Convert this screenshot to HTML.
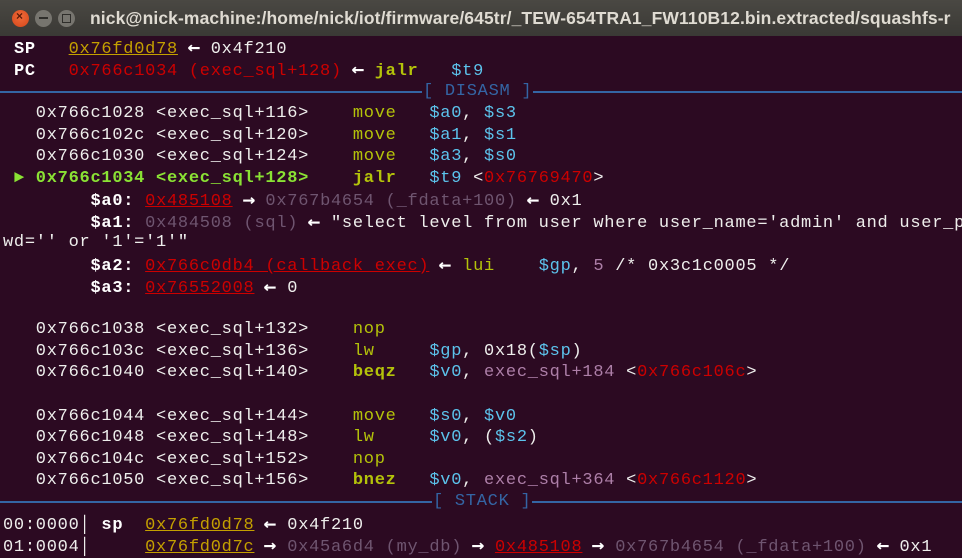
<!DOCTYPE html>
<html><head><meta charset="utf-8"><style>
*{margin:0;padding:0}
body{width:962px;height:558px;overflow:hidden;background:#2c0a22;position:relative;font-family:"Liberation Mono","DejaVu Sans Mono",monospace}
#tb{position:absolute;left:0;top:0;width:962px;height:36px;background:linear-gradient(#4a4843,#3a3935);overflow:hidden}
#tb .t{position:absolute;left:90px;top:8px;font:bold 17.5px "Liberation Sans",sans-serif;color:#dfdbd2;white-space:nowrap;letter-spacing:0.1px}
.b{position:absolute;top:10px;width:17px;height:17px;border-radius:50%;}
.r{position:absolute;left:3px;height:22px;line-height:22px;font-size:17px;letter-spacing:0.73px;white-space:pre;color:#eeeeec;max-width:959px;overflow:hidden}
.w{color:#fff;font-weight:bold}
.a{color:#fff;font-weight:bold;display:inline-block;width:10.93px;letter-spacing:0;font-family:"DejaVu Sans Mono",monospace;transform:scale(1.25,1.15)}
.y{color:#c4a000}.u{text-decoration:underline}
.rd{color:#cc0000}.g{color:#8ae234;font-weight:bold}
.m{color:#b4c30a}.mb{color:#b4c30a;font-weight:bold}
.c{color:#5cc3ec}.p{color:#ad7fa8}.d{color:#6f5570}
.sep{position:absolute;left:0;width:962px;height:2px;background:#3465a4}
.lab{position:absolute;height:22px;line-height:22px;font-size:17px;letter-spacing:0.73px;white-space:pre;color:#3465a4;background:#2c0a22;padding:0 1px}
</style></head><body>
<div id="tb">
<div class="b" style="left:12px;background:radial-gradient(circle at 50% 40%,#f06b3a,#d4461a);"><span style="position:absolute;left:4px;top:-1px;font:bold 12px 'Liberation Sans';color:#5a1a08">×</span></div>
<div class="b" style="left:35px;background:#77756f;"><span style="position:absolute;left:4px;top:7px;width:9px;height:2px;background:#2f2e2b"></span></div>
<div class="b" style="left:58px;background:#77756f;"><span style="position:absolute;left:4px;top:4px;width:7px;height:7px;border:1px solid #2f2e2b"></span></div>
<div class="t">nick@nick-machine:/home/nick/iot/firmware/645tr/_TEW-654TRA1_FW110B12.bin.extracted/squashfs-r</div>
</div>
<div class="r" style="top:37px"> <span class="w">SP</span>   <span class="y u">0x76fd0d78</span> <span class="a">←</span> 0x4f210</div>
<div class="r" style="top:59px"> <span class="w">PC</span>   <span class="rd">0x766c1034 (exec_sql+128)</span> <span class="a">←</span> <span class="mb">jalr</span>   <span class="c">$t9</span></div>
<div class="sep" style="top:91px"></div><div class="lab" style="top:81px;left:422px">[ DISASM ]</div>
<div class="r" style="top:103px">   0x766c1028 &lt;exec_sql+116&gt;    <span class="m">move</span>   <span class="c">$a0</span>, <span class="c">$s3</span></div>
<div class="r" style="top:125px">   0x766c102c &lt;exec_sql+120&gt;    <span class="m">move</span>   <span class="c">$a1</span>, <span class="c">$s1</span></div>
<div class="r" style="top:146px">   0x766c1030 &lt;exec_sql+124&gt;    <span class="m">move</span>   <span class="c">$a3</span>, <span class="c">$s0</span></div>
<div class="r" style="top:168px"> <span class="g">► 0x766c1034 &lt;exec_sql+128&gt;</span>    <span class="mb">jalr</span>   <span class="c">$t9</span> &lt;<span class="rd">0x76769470</span>&gt;</div>
<div class="r" style="top:189px">        <span class="w">$a0:</span> <span class="rd u">0x485108</span> <span class="a">→</span> <span class="d">0x767b4654 (_fdata+100)</span> <span class="a">←</span> 0x1</div>
<div class="r" style="top:211px">        <span class="w">$a1:</span> <span class="d">0x484508 (sql)</span> <span class="a">←</span> "select level from user where user_name='admin' and user_p</div>
<div class="r" style="top:232px">wd='' or '1'='1'"</div>
<div class="r" style="top:254px">        <span class="w">$a2:</span> <span class="rd u">0x766c0db4 (callback_exec)</span> <span class="a">←</span> <span class="m">lui</span>    <span class="c">$gp</span>, <span class="p">5</span> /* 0x3c1c0005 */</div>
<div class="r" style="top:276px">        <span class="w">$a3:</span> <span class="rd u">0x76552008</span> <span class="a">←</span> 0</div>
<div class="r" style="top:319px">   0x766c1038 &lt;exec_sql+132&gt;    <span class="m">nop</span></div>
<div class="r" style="top:341px">   0x766c103c &lt;exec_sql+136&gt;    <span class="m">lw</span>     <span class="c">$gp</span>, 0x18(<span class="c">$sp</span>)</div>
<div class="r" style="top:362px">   0x766c1040 &lt;exec_sql+140&gt;    <span class="mb">beqz</span>   <span class="c">$v0</span>, <span class="p">exec_sql+184</span> &lt;<span class="rd">0x766c106c</span>&gt;</div>
<div class="r" style="top:406px">   0x766c1044 &lt;exec_sql+144&gt;    <span class="m">move</span>   <span class="c">$s0</span>, <span class="c">$v0</span></div>
<div class="r" style="top:427px">   0x766c1048 &lt;exec_sql+148&gt;    <span class="m">lw</span>     <span class="c">$v0</span>, (<span class="c">$s2</span>)</div>
<div class="r" style="top:449px">   0x766c104c &lt;exec_sql+152&gt;    <span class="m">nop</span></div>
<div class="r" style="top:470px">   0x766c1050 &lt;exec_sql+156&gt;    <span class="mb">bnez</span>   <span class="c">$v0</span>, <span class="p">exec_sql+364</span> &lt;<span class="rd">0x766c1120</span>&gt;</div>
<div class="sep" style="top:501px"></div><div class="lab" style="top:491px;left:432px">[ STACK ]</div>
<div class="r" style="top:513px">00:0000│ <span class="w">sp</span>  <span class="y u">0x76fd0d78</span> <span class="a">←</span> 0x4f210</div>
<div class="r" style="top:535px">01:0004│     <span class="y u">0x76fd0d7c</span> <span class="a">→</span> <span class="d">0x45a6d4 (my_db)</span> <span class="a">→</span> <span class="rd u">0x485108</span> <span class="a">→</span> <span class="d">0x767b4654 (_fdata+100)</span> <span class="a">←</span> 0x1</div>
</body></html>
